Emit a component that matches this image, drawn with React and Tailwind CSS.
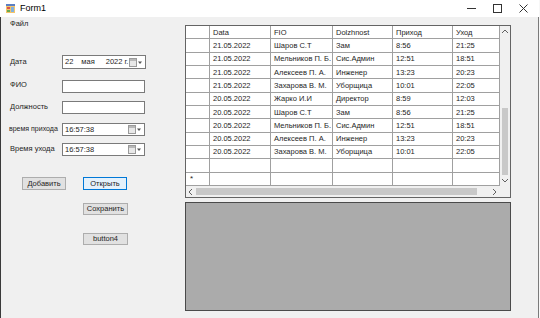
const rows = [
  ['21.05.2022', 'Шаров С.Т', 'Зам', '8:56', '21:25'],
  ['21.05.2022', 'Мельников П. Б.', 'Сис.Админ', '12:51', '18:51'],
  ['21.05.2022', 'Алексеев П. А.', 'Инженер', '13:23', '20:23'],
  ['21.05.2022', 'Захарова В. М.', 'Уборщица', '10:01', '22:05'],
  ['20.05.2022', 'Жарко И.И', 'Директор', '8:59', '12:03'],
  ['20.05.2022', 'Шаров С.Т', 'Зам', '8:56', '21:25'],
  ['20.05.2022', 'Мельников П. Б.', 'Сис.Админ', '12:51', '18:51'],
  ['20.05.2022', 'Алексеев П. А.', 'Инженер', '13:23', '20:23'],
  ['20.05.2022', 'Захарова В. М.', 'Уборщица', '10:01', '22:05'],
  ['', '', '', '', ''],
]

const widths = ['w-[61px]', 'w-[62px]', 'w-[60px]', 'w-[60px]', 'flex-1']

function PickerIcon() {
  return (
    <svg width="14" height="9" viewBox="0 0 14 9" className="shrink-0">
      <rect x="0.5" y="0.5" width="7" height="8" fill="#e8e8e8" stroke="#9a9a9a" />
      <rect x="1" y="1" width="6" height="2" fill="#b8b8b8" />
      <path d="M9 3.5 L13 3.5 L11 6 Z" fill="#555" />
    </svg>
  )
}

function Chevron({ dir }) {
  const d = {
    up: 'M1 5 L4 2 L7 5',
    down: 'M1 2 L4 5 L7 2',
    left: 'M5 1 L2 4 L5 7',
    right: 'M2 1 L5 4 L2 7',
  }[dir]
  return (
    <svg width="8" height="8" viewBox="0 0 8 8">
      <path d={d} fill="none" stroke="#606060" strokeWidth="1" />
    </svg>
  )
}

function Row({ cells, marker }) {
  return (
    <div className="flex h-[13.33px]">
      <div className="w-[24px] border-r border-b border-[#a0a0a0] flex items-center pl-[4px] text-[8px]">
        {marker}
      </div>
      {cells.map((c, i) => (
        <div
          key={i}
          className={`${widths[i]} border-r border-b border-[#a0a0a0] flex items-center pl-[3px] whitespace-nowrap overflow-hidden`}
        >
          {c}
        </div>
      ))}
    </div>
  )
}

function Btn({ children, className = '' }) {
  return (
    <div
      className={`flex items-center justify-center border text-[7.5px] ${className}`}
    >
      {children}
    </div>
  )
}

export default function App() {
  return (
    <div
      className="w-[540px] h-[318px] overflow-hidden flex flex-col bg-[#f7f7f7] text-[#1e1e1e]"
      style={{ fontFamily: '"Liberation Sans", Arial, sans-serif' }}
    >
      {/* title bar */}
      <div className="h-[17px] w-[539px] bg-white flex items-center shrink-0">
        <svg width="9" height="9" viewBox="0 0 9 9" className="ml-[6px]">
          <rect x="0" y="0" width="9" height="9" fill="#f4c46a" />
          <rect x="0" y="0" width="9" height="2" fill="#5b7fc4" />
          <rect x="1" y="3" width="3" height="2" fill="#d9534f" />
          <rect x="5" y="3" width="3" height="5" fill="#7fb0e0" />
          <rect x="1" y="6" width="3" height="2" fill="#6aa84f" />
        </svg>
        <span className="ml-[5px] text-[9px] text-black">Form1</span>
        <div className="ml-auto flex mr-[3px]">
          <div className="w-[26px] h-[17px] flex items-center justify-center">
            <svg width="9" height="9" viewBox="0 0 9 9">
              <path d="M0 4.5 H9" stroke="#333" strokeWidth="1" />
            </svg>
          </div>
          <div className="w-[26px] h-[17px] flex items-center justify-center">
            <svg width="9" height="9" viewBox="0 0 9 9">
              <rect x="0.5" y="0.5" width="8" height="8" fill="none" stroke="#333" />
            </svg>
          </div>
          <div className="w-[26px] h-[17px] flex items-center justify-center">
            <svg width="9" height="9" viewBox="0 0 9 9">
              <path d="M0.5 0.5 L8.5 8.5 M8.5 0.5 L0.5 8.5" stroke="#333" />
            </svg>
          </div>
        </div>
      </div>

      {/* form body */}
      <div className="flex flex-1 w-[539px] bg-[#f0f0f0] border-l border-r border-l-[#3a3a3a] border-r-[#7a7a7a]">
        {/* left column */}
        <div className="w-[184px] flex flex-col text-[7.5px]">
          <div className="pl-[9px] mt-[2px] leading-[10px]">Файл</div>

          <div className="flex items-center mt-[26px] h-[14px]">
            <div className="w-[61px] pl-[9px]">Дата</div>
            <div className="w-[84px] h-[14px] bg-white border border-[#7a7a7a] flex items-center pl-[2px] pr-[2px]">
              <span>22</span>
              <span className="ml-[8px]">мая</span>
              <span className="ml-[11px]">2022 г.</span>
              <span className="ml-auto"><PickerIcon /></span>
            </div>
          </div>

          <div className="flex items-center mt-[11px] h-[13px]">
            <div className="w-[61px] pl-[9px] -mt-[3px]">ФИО</div>
            <div className="w-[83px] h-[13px] bg-white border border-[#7a7a7a]" />
          </div>

          <div className="flex items-center mt-[8px] h-[13px]">
            <div className="w-[61px] pl-[9px] -mt-[2px]">Должность</div>
            <div className="w-[83px] h-[13px] bg-white border border-[#7a7a7a]" />
          </div>

          <div className="flex items-center mt-[9px] h-[13px]">
            <div className="w-[61px] pl-[8px] text-[7px] whitespace-nowrap">время прихода</div>
            <div className="w-[83px] h-[13px] bg-white border border-[#7a7a7a] flex items-center pl-[2px] pr-[2px]">
              <span>16:57:38</span>
              <span className="ml-auto"><PickerIcon /></span>
            </div>
          </div>

          <div className="flex items-center mt-[7px] h-[13px]">
            <div className="w-[61px] pl-[9px] -mt-[2px]">Время ухода</div>
            <div className="w-[83px] h-[13px] bg-white border border-[#7a7a7a] flex items-center pl-[2px] pr-[2px]">
              <span>16:57:38</span>
              <span className="ml-auto"><PickerIcon /></span>
            </div>
          </div>

          <div className="flex mt-[21px] ml-[21px] gap-[17px]">
            <Btn className="w-[44px] h-[13px] bg-[#e1e1e1] border-[#adadad]">Добавить</Btn>
            <Btn className="w-[44px] h-[13px] bg-[#e5f1fb] border-[#0078d7]">Открыть</Btn>
          </div>
          <Btn className="ml-[82px] mt-[13px] w-[45px] h-[12px] bg-[#e1e1e1] border-[#adadad]">Сохранить</Btn>
          <Btn className="ml-[82px] mt-[18px] w-[45px] h-[12px] bg-[#e1e1e1] border-[#adadad]">button4</Btn>
        </div>

        {/* right column */}
        <div className="w-[326px] pt-[8px] flex flex-col">
          <div className="h-[173px] border border-[#646464] bg-white flex flex-col text-[7.5px]">
            <div className="flex h-[160px]">
              <div className="w-[314px] flex flex-col">
                <Row cells={['Data', 'FIO', 'Dolzhnost', 'Приход', 'Уход']} />
                {rows.map((r, i) => (
                  <Row key={i} cells={r} />
                ))}
                <Row cells={['', '', '', '', '']} marker="*" />
              </div>
              <div className="w-[10px] bg-[#f0f0f0] flex flex-col">
                <div className="h-[11px] flex items-center justify-center"><Chevron dir="up" /></div>
                <div className="flex-1 flex flex-col justify-end">
                  <div className="h-[67px] mx-[2px] bg-[#c8c8c8]" />
                </div>
                <div className="h-[11px] flex items-center justify-center"><Chevron dir="down" /></div>
              </div>
            </div>
            <div className="flex h-[11px] bg-[#f0f0f0]">
              <div className="w-[10px] flex items-center justify-center"><Chevron dir="left" /></div>
              <div className="w-[294px] flex items-center">
                <div className="w-[281px] h-[7px] bg-[#c8c8c8]" />
              </div>
              <div className="w-[10px] flex items-center justify-center"><Chevron dir="right" /></div>
              <div className="w-[10px]" />
            </div>
          </div>
          <div className="mt-[4px] h-[109px] border border-[#4a4a4a] bg-[#ababab]" />
        </div>
      </div>
    </div>
  )
}
